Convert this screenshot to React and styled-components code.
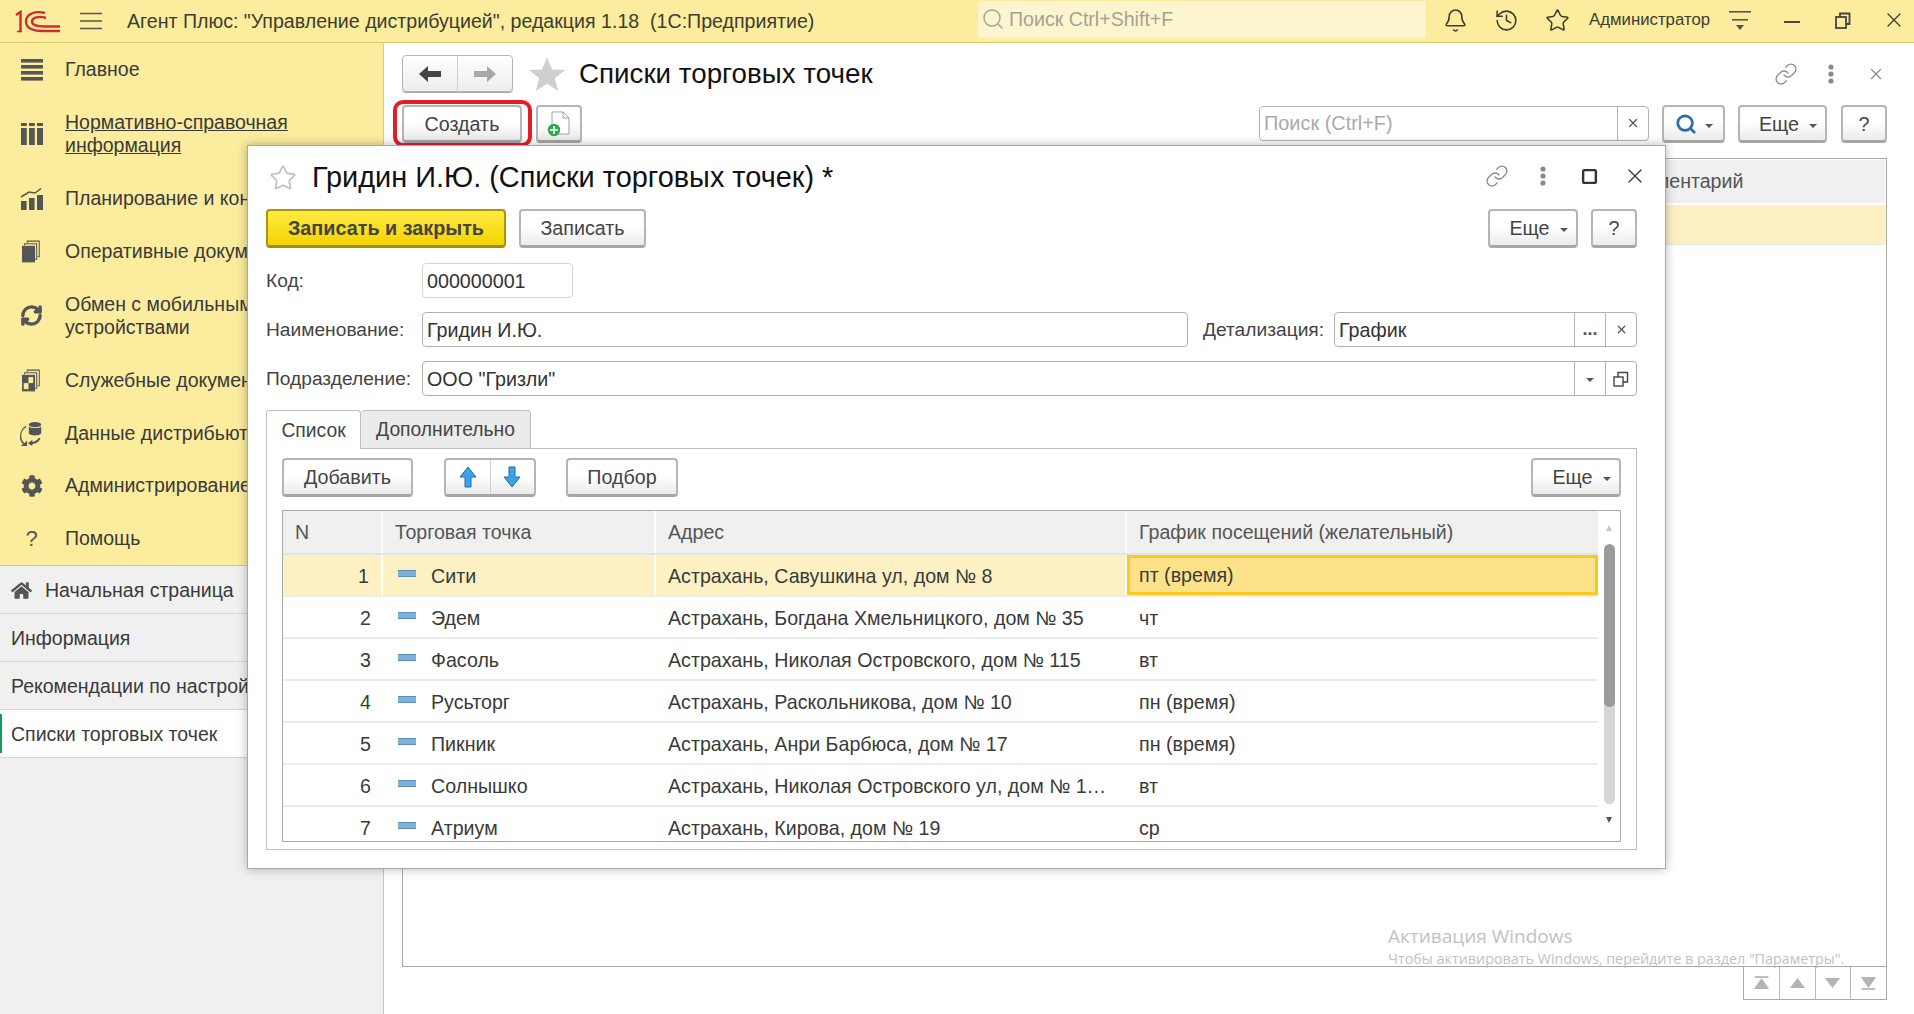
import React from "react";
import styled, { createGlobalStyle } from "styled-components";
import { Bell, History, Star, Link as LinkIcon, X, Search, RefreshCw, Square } from "lucide-react";
import { FaCog, FaHome } from "react-icons/fa";

const Global = createGlobalStyle`
  html, body { margin: 0; padding: 0; background: #fff; overflow: hidden; }
  body { font-family: "Liberation Sans", Arial, sans-serif; color: #333; }
  * { box-sizing: border-box; }
`;

const Shell = styled.div`
  position: relative;
  width: 1914px;
  height: 1014px;
  display: flex;
  flex-direction: column;
  overflow: hidden;
  font-size: 19.6px;
`;

/* ---------- top bar ---------- */
const TopBar = styled.header`
  height: 43px;
  flex: none;
  display: flex;
  align-items: center;
  background: #fbec9e;
  border-bottom: 1px solid #d8c76c;
  color: #3d3d2e;
`;
const LogoBox = styled.div`
  width: 80px;
  flex: none;
  padding-left: 15px;
  display: flex;
  align-items: center;
`;
const Hamburger = styled.div`
  width: 47px;
  flex: none;
  display: flex;
  align-items: center;
`;
const AppTitle = styled.div`
  width: 851px;
  flex: none;
  font-size: 19.6px;
  white-space: nowrap;
`;
const TopSearch = styled.div`
  width: 448px;
  flex: none;
  height: 37px;
  margin-top: -4px;
  background: #fdf5cf;
  border-radius: 2px;
  display: flex;
  align-items: center;
  gap: 4px;
  padding-left: 3px;
  color: #a5a294;
  font-size: 19.6px;
`;
const TopIcons = styled.div`
  display: flex;
  align-items: center;
  margin-left: 4px;
`;
const TopIcon = styled.div`
  width: ${(p) => p.$w || 51}px;
  flex: none;
  display: flex;
  justify-content: center;
  margin-top: ${(p) => p.$dy || 0}px;
  margin-left: ${(p) => p.$ml || 0}px;
`;
const UserName = styled.div`
  margin-left: 6px;
  width: 139px;
  flex: none;
  font-size: 16.8px;
  white-space: nowrap;
  margin-top: -3px;
`;

/* ---------- body ---------- */
const Body = styled.div`
  flex: 1;
  display: flex;
  min-height: 0;
`;
const Sidebar = styled.aside`
  width: 384px;
  flex: none;
  display: flex;
  flex-direction: column;
  background: #f0f0f0;
  border-right: 1px solid #c9c9c9;
`;
const Nav = styled.nav`
  height: 523px;
  background: #fbec9e;
  border-bottom: 1px solid #cfc69a;
  flex: none;
`;
const NavItem = styled.div`
  height: ${(p) => (p.$tall ? 76 : 52.8)}px;
  display: flex;
  align-items: center;
  padding-top: 1px;
  color: #3a3a3a;
  font-size: 19.5px;
  line-height: 23px;
  white-space: nowrap;
  overflow: hidden;
`;
const NavLabel = styled.span`
  text-decoration: ${(p) => (p.$link ? "underline" : "none")};
`;
const NavIcon = styled.div`
  width: 65px;
  flex: none;
  display: flex;
  justify-content: center;
  color: #555;
  font-size: 22px;
  line-height: 1;
  padding-right: 2px;
`;
const OpenTab = styled.div`
  height: 48px;
  display: flex;
  align-items: center;
  gap: 13px;
  padding: 1px 0 0 11px;
  font-size: 19.5px;
  color: #3a3a3a;
  white-space: nowrap;
  overflow: hidden;
  border-bottom: 1px solid #d6d6d6;
  position: relative;
  background: ${(p) => (p.$active ? "#fff" : "transparent")};
  &::before {
    content: "";
    display: ${(p) => (p.$active ? "block" : "none")};
    position: absolute;
    left: 0;
    top: 4px;
    bottom: 4px;
    width: 2px;
    background: #0f9d58;
  }
`;
const Main = styled.main`
  flex: 1;
  min-width: 0;
  display: flex;
  flex-direction: column;
  padding: 12px 27px 14px 18px;
`;
const HeadRow = styled.div`
  height: 37px;
  display: flex;
  align-items: center;
  flex: none;
`;
const NavGroup = styled.div`
  width: 111px;
  height: 37px;
  display: flex;
  border: 1px solid #b5b5b5;
  border-radius: 4px;
  background: linear-gradient(#fff, #ededed);
  box-shadow: 0 1px 0 #aaa;
`;
const NavSeg = styled.div`
  flex: 1;
  display: flex;
  align-items: center;
  justify-content: center;
  & + & { border-left: 1px solid #d0d0d0; }
`;
const HeadStar = styled.div`
  width: 66px;
  padding-left: 16px;
  display: flex;
  align-items: center;
`;
const PageTitle = styled.h1`
  flex: 1;
  margin: 0;
  font-weight: 400;
  font-size: 27.75px;
  color: #111;
  white-space: nowrap;
`;
const HeadIcons = styled.div`
  display: flex;
  align-items: center;
  color: #8a8a8a;
  margin-right: -11px;
`;
const HeadIcon = styled.div`
  width: ${(p) => p.$w || 45}px;
  display: flex;
  justify-content: center;
`;
const CommandRow = styled.div`
  height: 38px;
  margin-top: 13px;
  display: flex;
  align-items: center;
  flex: none;
`;
const Button = styled.div`
  position: relative;
  height: ${(p) => p.$h || 38}px;
  width: ${(p) => p.$w}px;
  margin-left: ${(p) => p.$ml || 0}px;
  flex: none;
  display: flex;
  align-items: center;
  justify-content: center;
  gap: 8px;
  padding-top: 1px;
  border: 2px solid #b5b5b5;
  border-bottom: 3px solid #a6a6a6;
  border-radius: 4px;
  background: linear-gradient(#fff, #fff 45%, #ebebeb);
  color: #444;
  font-size: 19.7px;
  white-space: nowrap;
`;
const MoreButton = styled(Button)`
  padding-left: 11px;
  gap: 10px;
`;
const PrimaryButton = styled(Button)`
  border: 2px solid #ad9606;
  border-bottom: 3px solid #a08a08;
  background: linear-gradient(#ffeb45, #f2d400);
  color: #444;
  font-weight: 700;
  font-size: 19.8px;
`;
const Highlight = styled.span`
  position: absolute;
  left: -11px;
  right: -12px;
  top: -7px;
  bottom: -7px;
  border: 4px solid #e81c24;
  border-radius: 10px;
  pointer-events: none;
`;
const Caret = styled.span`
  width: 0;
  height: 0;
  border-left: 4px solid transparent;
  border-right: 4px solid transparent;
  border-top: 4px solid #555;
  margin-top: 3px;
`;
const Spacer = styled.div`
  flex: 1;
`;
const FindBox = styled.div`
  width: 390px;
  height: 35px;
  display: flex;
  border: 1px solid #b3b3b3;
  border-radius: 4px;
  background: #fff;
  margin-right: 13px;
  margin-top: -2px;
  color: #aaa;
  font-size: 19.9px;
`;
const FindText = styled.div`
  flex: 1;
  display: flex;
  align-items: center;
  padding-left: 4px;
`;
const FieldBtn = styled.div`
  width: 31px;
  flex: none;
  display: flex;
  align-items: center;
  justify-content: center;
  border-left: 1px solid #b3b3b3;
  color: #555;
  font-size: 18px;
  font-weight: ${(p) => (p.$bold ? 700 : 400)};
`;
const ListTable = styled.section`
  flex: 1;
  margin-top: 15px;
  border: 1px solid #a9a9a9;
  min-height: 0;
`;
const ListHead = styled.div`
  height: 44px;
  background: #f0f0f0;
  border-bottom: 1px solid #fff;
  margin: 1px;
  display: flex;
  align-items: center;
  padding-left: 1216px;
  color: #555;
  font-size: 19.6px;
  white-space: nowrap;
`;
const ListRow = styled.div`
  height: 40px;
  background: #fdf1c4;
  border-bottom: 1px solid #e6e6e6;
`;
const Pager = styled.div`
  height: 33px;
  width: 144px;
  flex: none;
  align-self: flex-end;
  display: flex;
  border: 1px solid #a9a9a9;
  border-top: none;
`;
const PagerCell = styled.div`
  flex: 1;
  display: flex;
  align-items: center;
  justify-content: center;
  & + & { border-left: 1px solid #b9b9b9; }
`;

/* ---------- dialog ---------- */
const Dialog = styled.section`
  position: absolute;
  left: 247px;
  top: 145px;
  width: 1419px;
  height: 724px;
  background: #fff;
  border: 1px solid #a8a8a8;
  box-shadow: 0 0 10px rgba(0, 0, 0, 0.28);
  padding: 0 28px 0 18px;
  display: flex;
  flex-direction: column;
`;
const DialogHead = styled.div`
  height: 63px;
  flex: none;
  display: flex;
  align-items: center;
`;
const DialogStar = styled.div`
  width: 46px;
  padding-left: 3px;
  color: #bcc2cc;
  display: flex;
`;
const DialogTitle = styled.h2`
  flex: 1;
  margin: 0;
  font-weight: 400;
  font-size: 28.9px;
  color: #111;
  white-space: nowrap;
`;
const DialogIcons = styled.div`
  display: flex;
  align-items: center;
  color: #8a8a8a;
  margin: -3px -21px 0 0;
`;
const DialogIcon = styled.div`
  width: ${(p) => p.$w || 46}px;
  display: flex;
  justify-content: center;
  color: ${(p) => p.$c || "inherit"};
`;
const Toolbar = styled.div`
  height: 39px;
  flex: none;
  display: flex;
  align-items: flex-start;
`;
const FormRow = styled.div`
  height: 35px;
  flex: none;
  margin-top: ${(p) => p.$mt || 14}px;
  display: flex;
  align-items: center;
  font-size: 19.7px;
  color: #444;
`;
const Label = styled.label`
  width: ${(p) => p.$w || 156}px;
  flex: none;
  white-space: nowrap;
  font-size: 19.2px;
  padding-top: 1px;
  margin-left: ${(p) => p.$ml || 0}px;
`;
const Field = styled.div`
  height: 100%;
  width: ${(p) => (p.$w ? `${p.$w}px` : "auto")};
  flex: ${(p) => (p.$w ? "none" : 1)};
  display: flex;
  border: 1px solid ${(p) => (p.$light ? "#d4d4d4" : "#b0b0b0")};
  border-radius: 4px;
  background: #fff;
  color: #333;
`;
const FieldValue = styled.div`
  flex: 1;
  display: flex;
  align-items: center;
  padding: 1px 0 0 4px;
  white-space: nowrap;
`;
const Tabs = styled.div`
  height: 39px;
  flex: none;
  margin-top: 14px;
  display: flex;
`;
const Tab = styled.div`
  width: ${(p) => p.$w}px;
  display: flex;
  align-items: center;
  justify-content: center;
  padding-top: 1px;
  border: 1px solid #bdbdbd;
  border-left: ${(p) => (p.$active ? "1px solid #bdbdbd" : "none")};
  border-bottom: ${(p) => (p.$active ? "none" : "1px solid #bdbdbd")};
  border-radius: 4px 4px 0 0;
  background: ${(p) => (p.$active ? "#fff" : "#ebebeb")};
  color: #444;
  font-size: 19.3px;
`;
const TabFill = styled.div`
  flex: 1;
  border-bottom: 1px solid #bdbdbd;
`;
const TabPanel = styled.div`
  height: 401px;
  flex: none;
  border: 1px solid #bdbdbd;
  border-top: none;
  padding: 9px 15px 0;
  display: flex;
  flex-direction: column;
`;
const PanelBar = styled.div`
  height: 39px;
  flex: none;
  display: flex;
`;
const ArrowGroup = styled.div`
  width: 92px;
  height: 39px;
  margin-left: 31px;
  display: flex;
  border: 2px solid #b5b5b5;
  border-bottom: 3px solid #a6a6a6;
  border-radius: 4px;
  background: linear-gradient(#fff, #fff 45%, #ebebeb);
`;
const Grid = styled.div`
  height: 332px;
  margin-top: 13px;
  flex: none;
  display: flex;
  border: 1px solid #a9a9a9;
`;
const GridBody = styled.div`
  flex: 1;
  min-width: 0;
  overflow: hidden;
`;
const colDefs = "100px 273px 471px 1fr";
const GridHead = styled.div`
  height: 44px;
  display: grid;
  grid-template-columns: ${colDefs};
  color: #555;
  font-size: 19.6px;
  border-bottom: 2px solid #e4e4e4;
`;
const HeadCell = styled.div`
  display: flex;
  align-items: center;
  background: #f0f0f0;
  padding-left: 12px;
  border-right: 2px solid #fff;
  white-space: nowrap;
  &:last-child { border-right: none; }
`;
const GridRow = styled.div`
  height: 42px;
  display: grid;
  grid-template-columns: ${colDefs};
  border-bottom: 2px solid #ececec;
  font-size: 19.65px;
  color: #3a3a3a;
  background: ${(p) => (p.$current ? "#fdf1c4" : "#fff")};
`;
const Cell = styled.div`
  display: flex;
  align-items: center;
  padding: 2px 0 0 12px;
  white-space: nowrap;
  overflow: hidden;
  border-right: ${(p) => (p.$current ? "2px solid #fff" : "none")};
`;
const NumCell = styled(Cell)`
  justify-content: flex-end;
  padding: 2px 12px 0 0;
  font-size: 19.6px;
`;
const SelCell = styled(Cell)`
  background: #fde28a;
  border: 3px solid #fbc820;
  padding: 1px 0 0 9px;
  height: 40px;
`;
const RowMark = styled.span`
  width: 18px;
  height: 7px;
  flex: none;
  background: #7fb0d9;
  border-top: 1px solid #5c8fb8;
  border-bottom: 1px solid #5c8fb8;
  margin: -5px 15px 0 3px;
`;
const ScrollCol = styled.div`
  width: 22px;
  flex: none;
  display: flex;
  flex-direction: column;
  align-items: center;
  padding-top: 14px;
  color: #555;
`;
const ScrollArrow = styled.span`
  width: 0;
  height: 0;
  border-left: 3.5px solid transparent;
  border-right: 3.5px solid transparent;
  ${(p) => (p.$down ? "border-top: 6px solid #555;" : "border-bottom: 6px solid #c8c8c8;")}
`;
const Track = styled.div`
  width: 11px;
  height: 260px;
  margin: 13px 0 13px;
  border-radius: 6px;
  background: #d6d6d6;
  overflow: hidden;
`;
const Thumb = styled.div`
  height: 163px;
  border-radius: 6px;
  background: #9b9b9b;
`;
const Watermark = styled.div`
  position: absolute;
  left: 1388px;
  top: 923px;
  color: #c2c2c2;
  font-family: "Open Sans", "Liberation Sans", sans-serif;
  pointer-events: none;
  white-space: nowrap;
`;
const WmTitle = styled.div`
  font-size: 19px;
  line-height: 26px;
`;
const WmText = styled.div`
  font-size: 14.35px;
  line-height: 19px;
`;

/* ---------- drawings ---------- */
const Logo = () => (
  <svg width="45" height="23" viewBox="0 0 45 23" fill="none" stroke="#d22a2e" strokeWidth="2.4">
    <path d="M1 5 L5.5 2 V21" />
    <path d="M2 21.5 H7" strokeWidth="1.6" />
    <path d="M30 3 C20 0.5 11 4 11 11.5 C11 19 20 21.5 30 21 H45" />
    <path d="M31 8 C24 5.5 17 7.5 17 11.5 C17 15.5 23 16.5 30 16.5 H45" />
  </svg>
);
const BurgerIcon = () => (
  <svg width="22" height="18" viewBox="0 0 22 18" stroke="#555" strokeWidth="1.6">
    <path d="M0 1.5H22M0 9H22M0 16.5H22" />
  </svg>
);
const BigStar = () => (
  <svg width="36" height="34" viewBox="0 0 36 34" fill="#cfcfcf">
    <path d="M18 0 L23 12.5 L36 13 L25.8 21.3 L29.2 34 L18 26.8 L6.8 34 L10.2 21.3 L0 13 L13 12.5 Z" />
  </svg>
);
const DotsIcon = () => (
  <svg width="6" height="20" viewBox="0 0 6 20" fill="#8a8a8a">
    <circle cx="3" cy="3" r="2.6" /><circle cx="3" cy="10" r="2.6" /><circle cx="3" cy="17" r="2.6" />
  </svg>
);
const UserMenuIcon = () => (
  <svg width="23" height="23" viewBox="0 0 23 23" fill="#555">
    <rect x="0" y="1" width="22" height="1.6" />
    <rect x="3" y="9" width="16" height="1.6" />
    <path d="M7 15 H15 L11 20 Z" />
  </svg>
);
const NavListIcon = () => (
  <svg width="22" height="24" viewBox="0 0 22 24" fill="#555">
    <rect y="1" width="22" height="3.6" /><rect y="7" width="22" height="3.6" />
    <rect y="13" width="22" height="3.6" /><rect y="19" width="22" height="3.6" />
  </svg>
);
const CatalogIcon = () => (
  <svg width="22" height="24" viewBox="0 0 22 24" fill="#555">
    <rect x="0" y="1" width="5.8" height="3" /><rect x="8" y="1" width="5.8" height="3" /><rect x="16" y="1" width="6" height="3" />
    <rect x="0" y="6" width="5.8" height="17" /><rect x="8" y="6" width="5.8" height="17" /><rect x="16" y="6" width="6" height="17" />
  </svg>
);
const ChartIcon = () => (
  <svg width="22" height="24" viewBox="0 0 22 24" fill="#555">
    <rect x="0" y="14" width="5.6" height="9" /><rect x="8" y="11" width="5.6" height="12" /><rect x="16" y="8" width="6" height="15" />
    <path d="M0 10 L8 5 L14 6 L20 1.5" fill="none" stroke="#555" strokeWidth="1.5" />
  </svg>
);
const DocsIcon = () => (
  <svg width="19" height="23" viewBox="0 0 22 26" fill="none" stroke="#555" strokeWidth="1.2">
    <path d="M6 3 V1 H20 V19 H18" /><path d="M3 6 V4 H17 V22 H15" />
    <rect x="0.5" y="7" width="14" height="18" fill="#555" />
  </svg>
);
const ServiceDocsIcon = () => (
  <svg width="19" height="23" viewBox="0 0 22 26" fill="none" stroke="#555" strokeWidth="1.2">
    <path d="M6 3 V1 H20 V19 H18" /><path d="M3 6 V4 H17 V22 H15" />
    <rect x="0.5" y="7" width="14" height="18" fill="#555" />
    <rect x="7.5" y="9" width="5.5" height="7" fill="#fbec9e" stroke="none" />
    <rect x="2" y="16" width="5.5" height="7" fill="#fbec9e" stroke="none" />
  </svg>
);
const DataIcon = () => (
  <svg width="23" height="25" viewBox="0 0 26 28" fill="#555">
    <ellipse cx="17" cy="4" rx="7" ry="3" />
    <path d="M10 6 C12 8.5 22 8.5 24 6 V14 C22 17 12 17 10 14 Z" />
    <path d="M7 7 C1 10 -1 20 5 25 L8 22 V28 H1 L3.5 26 C-3 20 0 9 7 5 Z" />
    <path d="M21 19 C19 22 17 23 14 23.5 V21 L9 25 L14 28 V25.8 C18 25.5 22 23 23 19 Z" />
  </svg>
);
const BackArrow = ({ c }) => (
  <svg width="22" height="16" viewBox="0 0 22 16" fill={c}>
    <path d="M0 8 L9 0 V5 H22 V11 H9 V16 Z" />
  </svg>
);
const ForwardArrow = ({ c }) => (
  <svg width="22" height="16" viewBox="0 0 22 16" fill={c}>
    <path d="M22 8 L13 0 V5 H0 V11 H13 V16 Z" />
  </svg>
);
const AddDocIcon = () => (
  <svg width="24" height="26" viewBox="0 0 24 26">
    <path d="M5 1 H16 L22 7 V23 H5 Z" fill="#fff" stroke="#9aa4ae" />
    <path d="M16 1 V7 H22" fill="none" stroke="#9aa4ae" />
    <circle cx="7" cy="19" r="6.2" fill="#2fa84f" />
    <path d="M7 15 V23 M3 19 H11" stroke="#fff" strokeWidth="1.7" />
  </svg>
);
const UpArrow = () => (
  <svg width="18" height="22" viewBox="0 0 18 22">
    <path d="M9 1 L17 11 H12 V21 H6 V11 H1 Z" fill="#3ba3ea" stroke="#1d6fae" />
  </svg>
);
const DownArrow = () => (
  <svg width="18" height="22" viewBox="0 0 18 22">
    <path d="M9 21 L17 11 H12 V1 H6 V11 H1 Z" fill="#3ba3ea" stroke="#1d6fae" />
  </svg>
);
const PagerIcon = ({ kind }) => (
  <svg width="17" height="14" viewBox="0 0 20 16" fill="#b4b4b4">
    {kind === "first" && <><rect x="2" y="0" width="16" height="2" /><path d="M10 2 L19 15 H1 Z" /></>}
    {kind === "up" && <path d="M10 2 L19 14 H1 Z" />}
    {kind === "down" && <path d="M10 14 L19 2 H1 Z" />}
    {kind === "last" && <><path d="M10 14 L19 1 H1 Z" /><rect x="2" y="14" width="16" height="2" /></>}
  </svg>
);
const CopyIcon = () => (
  <svg width="16" height="16" viewBox="0 0 16 16" fill="none" stroke="#444" strokeWidth="1.4">
    <rect x="1" y="6" width="9" height="9" /><path d="M5 6V1.5H14.5V11H10" />
  </svg>
);
const RestoreIcon = () => (
  <svg width="16" height="17" viewBox="0 0 16 17" fill="none" stroke="#444" strokeWidth="1.8">
    <rect x="1" y="5" width="10" height="11" /><path d="M5 5V1.5H14.5V12H11" />
  </svg>
);
const MinimizeIcon = () => (
  <svg width="16" height="4" viewBox="0 0 16 4"><rect y="2" width="16" height="2" fill="#444" /></svg>
);

const navItems = [
  { t: "Главное", i: <NavListIcon /> },
  { t: <>Нормативно-справочная<br />информация</>, i: <CatalogIcon />, tall: true, link: true },
  { t: "Планирование и контроль", i: <ChartIcon /> },
  { t: "Оперативные документы", i: <DocsIcon /> },
  { t: <>Обмен с мобильными<br />устройствами</>, i: <RefreshCw size={23} strokeWidth={3.6} />, tall: true },
  { t: "Служебные документы", i: <ServiceDocsIcon /> },
  { t: "Данные дистрибьютора", i: <DataIcon /> },
  { t: "Администрирование", i: <FaCog size={22} /> },
  { t: "Помощь", i: <span>?</span> },
];

const rows = [
  ["1", "Сити", "Астрахань, Савушкина ул, дом № 8", "пт (время)"],
  ["2", "Эдем", "Астрахань, Богдана Хмельницкого, дом № 35", "чт"],
  ["3", "Фасоль", "Астрахань, Николая Островского, дом № 115", "вт"],
  ["4", "Русьторг", "Астрахань, Раскольникова, дом № 10", "пн (время)"],
  ["5", "Пикник", "Астрахань, Анри Барбюса, дом № 17", "пн (время)"],
  ["6", "Солнышко", "Астрахань, Николая Островского ул, дом № 1…", "вт"],
  ["7", "Атриум", "Астрахань, Кирова, дом № 19", "ср"],
];

export default function App() {
  return (
    <Shell>
      <Global />
      <TopBar>
        <LogoBox><Logo /></LogoBox>
        <Hamburger><BurgerIcon /></Hamburger>
        <AppTitle>Агент Плюс: "Управление дистрибуцией", редакция 1.18&nbsp;&nbsp;(1С:Предприятие)</AppTitle>
        <TopSearch><Search size={24} strokeWidth={1.4} />Поиск Ctrl+Shift+F</TopSearch>
        <TopIcons>
          <TopIcon $dy={-2}><Bell size={25} strokeWidth={1.5} /></TopIcon>
          <TopIcon $dy={-2}><History size={25} strokeWidth={1.5} /></TopIcon>
          <TopIcon $dy={-2}><Star size={25} strokeWidth={1.5} /></TopIcon>
          <UserName>Администратор</UserName>
          <TopIcon $w={24}><UserMenuIcon /></TopIcon>
          <TopIcon $ml={14}><MinimizeIcon /></TopIcon>
          <TopIcon $dy={-2}><RestoreIcon /></TopIcon>
          <TopIcon $dy={-2}><X size={24} strokeWidth={1.3} /></TopIcon>
        </TopIcons>
      </TopBar>
      <Body>
        <Sidebar>
          <Nav>
            {navItems.map((n, i) => (
              <NavItem key={i} $tall={n.tall}>
                <NavIcon>{n.i}</NavIcon>
                <NavLabel $link={n.link}>{n.t}</NavLabel>
              </NavItem>
            ))}
          </Nav>
          <OpenTab><FaHome size={21} color="#555" />Начальная страница</OpenTab>
          <OpenTab>Информация</OpenTab>
          <OpenTab>Рекомендации по настройке</OpenTab>
          <OpenTab $active>Списки торговых точек</OpenTab>
        </Sidebar>
        <Main>
          <HeadRow>
            <NavGroup>
              <NavSeg><BackArrow c="#444" /></NavSeg>
              <NavSeg><ForwardArrow c="#a8a8a8" /></NavSeg>
            </NavGroup>
            <HeadStar><BigStar /></HeadStar>
            <PageTitle>Списки торговых точек</PageTitle>
            <HeadIcons>
              <HeadIcon><LinkIcon size={24} strokeWidth={1.3} /></HeadIcon>
              <HeadIcon><DotsIcon /></HeadIcon>
              <HeadIcon><X size={18} strokeWidth={1.6} /></HeadIcon>
            </HeadIcons>
          </HeadRow>
          <CommandRow>
            <Button $w={120}>Создать<Highlight /></Button>
            <Button $w={46} $ml={14}><AddDocIcon /></Button>
            <Spacer />
            <FindBox>
              <FindText>Поиск (Ctrl+F)</FindText>
              <FieldBtn><X size={14} strokeWidth={2.2} /></FieldBtn>
            </FindBox>
            <Button $w={63}><Search size={22} strokeWidth={3} color="#2a6fa8" /><Caret /></Button>
            <MoreButton $w={89} $ml={13}>Еще<Caret /></MoreButton>
            <Button $w={46} $ml={14}>?</Button>
          </CommandRow>
          <ListTable>
            <ListHead>Комментарий</ListHead>
            <ListRow />
          </ListTable>
          <Pager>
            <PagerCell><PagerIcon kind="first" /></PagerCell>
            <PagerCell><PagerIcon kind="up" /></PagerCell>
            <PagerCell><PagerIcon kind="down" /></PagerCell>
            <PagerCell><PagerIcon kind="last" /></PagerCell>
          </Pager>
        </Main>
      </Body>

      <Watermark>
        <WmTitle>Активация Windows</WmTitle>
        <WmText>Чтобы активировать Windows, перейдите в раздел "Параметры".</WmText>
      </Watermark>

      <Dialog>
        <DialogHead>
          <DialogStar><Star size={28} strokeWidth={1.5} /></DialogStar>
          <DialogTitle>Гридин И.Ю. (Списки торговых точек) *</DialogTitle>
          <DialogIcons>
            <DialogIcon><LinkIcon size={24} strokeWidth={1.3} /></DialogIcon>
            <DialogIcon><DotsIcon /></DialogIcon>
            <DialogIcon $c="#333"><Square size={17} strokeWidth={2.4} absoluteStrokeWidth /></DialogIcon>
            <DialogIcon $c="#333"><X size={24} strokeWidth={1.3} /></DialogIcon>
          </DialogIcons>
        </DialogHead>
        <Toolbar>
          <PrimaryButton $w={240} $h={39}>Записать и закрыть</PrimaryButton>
          <Button $w={127} $ml={13} $h={39}>Записать</Button>
          <Spacer />
          <MoreButton $w={90} $h={39}>Еще<Caret /></MoreButton>
          <Button $w={46} $ml={13} $h={39}>?</Button>
        </Toolbar>
        <FormRow $mt={15}>
          <Label>Код:</Label>
          <Field $w={151} $light><FieldValue>000000001</FieldValue></Field>
        </FormRow>
        <FormRow>
          <Label>Наименование:</Label>
          <Field><FieldValue>Гридин И.Ю.</FieldValue></Field>
          <Label $w={131} $ml={15}>Детализация:</Label>
          <Field $w={303}>
            <FieldValue>График</FieldValue>
            <FieldBtn $bold>...</FieldBtn>
            <FieldBtn><X size={13} strokeWidth={2.2} /></FieldBtn>
          </Field>
        </FormRow>
        <FormRow>
          <Label>Подразделение:</Label>
          <Field>
            <FieldValue>ООО "Гризли"</FieldValue>
            <FieldBtn><Caret /></FieldBtn>
            <FieldBtn><CopyIcon /></FieldBtn>
          </Field>
        </FormRow>
        <Tabs>
          <Tab $active $w={95}>Список</Tab>
          <Tab $w={170}>Дополнительно</Tab>
          <TabFill />
        </Tabs>
        <TabPanel>
          <PanelBar>
            <Button $w={131} $h={39}>Добавить</Button>
            <ArrowGroup>
              <NavSeg><UpArrow /></NavSeg>
              <NavSeg><DownArrow /></NavSeg>
            </ArrowGroup>
            <Button $w={112} $h={39} $ml={30}>Подбор</Button>
            <Spacer />
            <MoreButton $w={90} $h={39}>Еще<Caret /></MoreButton>
          </PanelBar>
          <Grid>
            <GridBody>
              <GridHead>
                <HeadCell>N</HeadCell>
                <HeadCell>Торговая точка</HeadCell>
                <HeadCell>Адрес</HeadCell>
                <HeadCell>График посещений (желательный)</HeadCell>
              </GridHead>
              {rows.map((r, i) => (
                <GridRow key={r[0]} $current={i === 0}>
                  <NumCell $current={i === 0}>{r[0]}</NumCell>
                  <Cell $current={i === 0}><RowMark />{r[1]}</Cell>
                  <Cell $current={i === 0}>{r[2]}</Cell>
                  {i === 0 ? <SelCell>{r[3]}</SelCell> : <Cell>{r[3]}</Cell>}
                </GridRow>
              ))}
            </GridBody>
            <ScrollCol>
              <ScrollArrow />
              <Track><Thumb /></Track>
              <ScrollArrow $down />
            </ScrollCol>
          </Grid>
        </TabPanel>
      </Dialog>
    </Shell>
  );
}
